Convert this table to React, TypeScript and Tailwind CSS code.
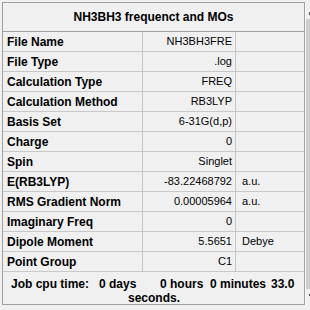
import React from "react";

type Row = { label: string; value: string; unit?: string };

const rows: Row[] = [
  { label: "File Name", value: "NH3BH3FRE" },
  { label: "File Type", value: ".log" },
  { label: "Calculation Type", value: "FREQ" },
  { label: "Calculation Method", value: "RB3LYP" },
  { label: "Basis Set", value: "6-31G(d,p)" },
  { label: "Charge", value: "0" },
  { label: "Spin", value: "Singlet" },
  { label: "E(RB3LYP)", value: "-83.22468792", unit: "a.u." },
  { label: "RMS Gradient Norm", value: "0.00005964", unit: "a.u." },
  { label: "Imaginary Freq", value: "0" },
  { label: "Dipole Moment", value: "5.5651", unit: "Debye" },
  { label: "Point Group", value: "C1" },
];

const font = { fontFamily: '"Liberation Sans", Arial, sans-serif' };

export default function App() {
  return (
    <div
      className="w-[310px] h-[310px] bg-[#f0f0f0] overflow-hidden pt-[2px] pl-[2px] text-black"
      style={font}
    >
      <div className="flex">
        {/* summary table */}
        <div className="w-[303px] h-[303px] border border-[#a0a0a0] flex flex-col overflow-hidden">
          <div className="h-[29px] shrink-0 border-b border-[#a0a0a0] flex items-center justify-center text-[12px] font-bold">
            NH3BH3 frequenct and MOs
          </div>
          {rows.map((r) => (
            <div key={r.label} className="h-[20px] shrink-0 border-b border-[#c8c8c8] flex">
              <div className="w-[140px] shrink-0 border-r border-[#c8c8c8] pl-[4px] flex items-center text-[12px] font-bold whitespace-nowrap">
                {r.label}
              </div>
              <div className="w-[93px] shrink-0 border-r border-[#c8c8c8] pr-[3px] flex items-center justify-end text-[11px] whitespace-nowrap">
                {r.value}
              </div>
              <div className="flex-1 pl-[6px] flex items-center text-[11px] whitespace-nowrap">
                {r.unit ?? ""}
              </div>
            </div>
          ))}
          {/* cpu time footer, wraps onto a second line */}
          <div className="flex-1 pt-[5px] text-[12px] font-bold leading-[14px] whitespace-pre overflow-hidden">
            <div className="flex pl-[8px]">
              <span className="w-[88px] shrink-0">Job cpu time:</span>
              <span className="w-[61px] shrink-0">0 days</span>
              <span className="w-[50px] shrink-0">0 hours</span>
              <span className="w-[61px] shrink-0">0 minutes</span>
              <span>33.0</span>
            </div>
            <div className="pl-[125px]">seconds.</div>
          </div>
        </div>
        {/* clipped vertical scrollbar */}
        <div className="w-[5px] h-[303px] flex flex-col border-l border-[#fafafa]">
          <div className="h-[17px] relative">
            <div className="absolute left-[3px] top-[10px] w-[2px] h-[3px] bg-[#606060]" />
          </div>
          <div className="flex-1 bg-[#cdcdcd]" />
          <div className="h-[16px] relative">
            <div className="absolute left-[3px] top-[5px] w-[2px] h-[2px] bg-[#606060]" />
          </div>
        </div>
      </div>
    </div>
  );
}
